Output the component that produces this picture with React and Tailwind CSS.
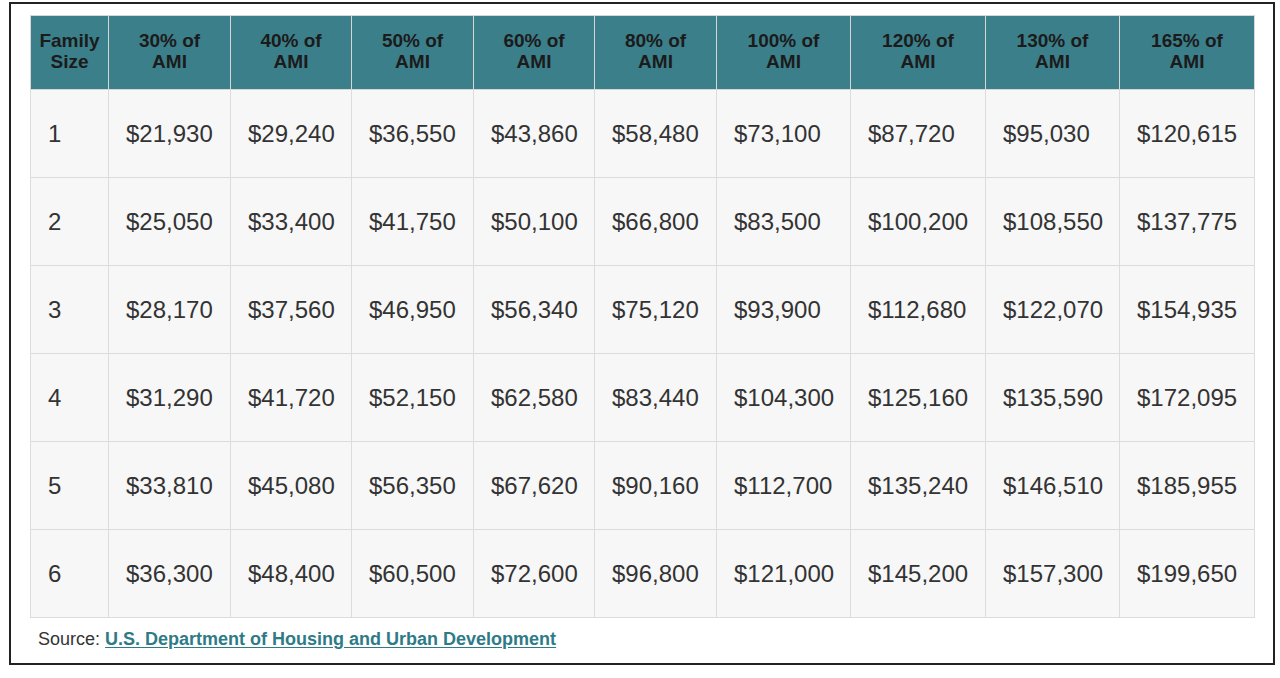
const COLUMNS = [
  { top: 'Family', bottom: 'Size', width: 'w-[78px]' },
  { top: '30% of', bottom: 'AMI', width: 'w-[122px]' },
  { top: '40% of', bottom: 'AMI', width: 'w-[121px]' },
  { top: '50% of', bottom: 'AMI', width: 'w-[122px]' },
  { top: '60% of', bottom: 'AMI', width: 'w-[121px]' },
  { top: '80% of', bottom: 'AMI', width: 'w-[122px]' },
  { top: '100% of', bottom: 'AMI', width: 'w-[134px]' },
  { top: '120% of', bottom: 'AMI', width: 'w-[135px]' },
  { top: '130% of', bottom: 'AMI', width: 'w-[134px]' },
  { top: '165% of', bottom: 'AMI', width: 'w-[135px]' },
];

const ROWS = [
  ['1', '$21,930', '$29,240', '$36,550', '$43,860', '$58,480', '$73,100', '$87,720', '$95,030', '$120,615'],
  ['2', '$25,050', '$33,400', '$41,750', '$50,100', '$66,800', '$83,500', '$100,200', '$108,550', '$137,775'],
  ['3', '$28,170', '$37,560', '$46,950', '$56,340', '$75,120', '$93,900', '$112,680', '$122,070', '$154,935'],
  ['4', '$31,290', '$41,720', '$52,150', '$62,580', '$83,440', '$104,300', '$125,160', '$135,590', '$172,095'],
  ['5', '$33,810', '$45,080', '$56,350', '$67,620', '$90,160', '$112,700', '$135,240', '$146,510', '$185,955'],
  ['6', '$36,300', '$48,400', '$60,500', '$72,600', '$96,800', '$121,000', '$145,200', '$157,300', '$199,650'],
];

export default function App() {
  return (
    <div className="w-[1280px] h-[678px] bg-white pt-[2px] pl-[9px] font-['Liberation_Sans',Arial,sans-serif]">
      <div className="w-[1266px] h-[663px] border-2 border-[#222] pt-[11px] pl-[19px]">
        <table className="table-fixed border-collapse w-[1224px]">
          <thead>
            <tr className="h-[74px] bg-[#3b7f8a]">
              {COLUMNS.map((col) => (
                <th
                  key={col.top}
                  className={`${col.width} border border-[#d6d6d6] text-center align-middle font-bold text-[19px] leading-[21px] text-[#1b1b1b] pb-[4px]`}
                >
                  {col.top}
                  <br />
                  {col.bottom}
                </th>
              ))}
            </tr>
          </thead>
          <tbody>
            {ROWS.map((row) => (
              <tr key={row[0]} className="h-[88px] bg-[#f7f7f7]">
                {row.map((cell, i) => (
                  <td
                    key={i}
                    className="border border-[#dcdcdc] pl-[17px] align-middle text-left text-[24px] text-[#333] whitespace-nowrap"
                  >
                    {cell}
                  </td>
                ))}
              </tr>
            ))}
          </tbody>
        </table>

        {/* Source line */}
        <div className="mt-[11px] pl-[8px] text-[18px] leading-[20px] text-[#333]">
          Source:{' '}
          <a href="#" className="font-bold text-[#2e7b87] underline underline-offset-2">
            U.S. Department of Housing and Urban Development
          </a>
        </div>
      </div>
    </div>
  );
}
